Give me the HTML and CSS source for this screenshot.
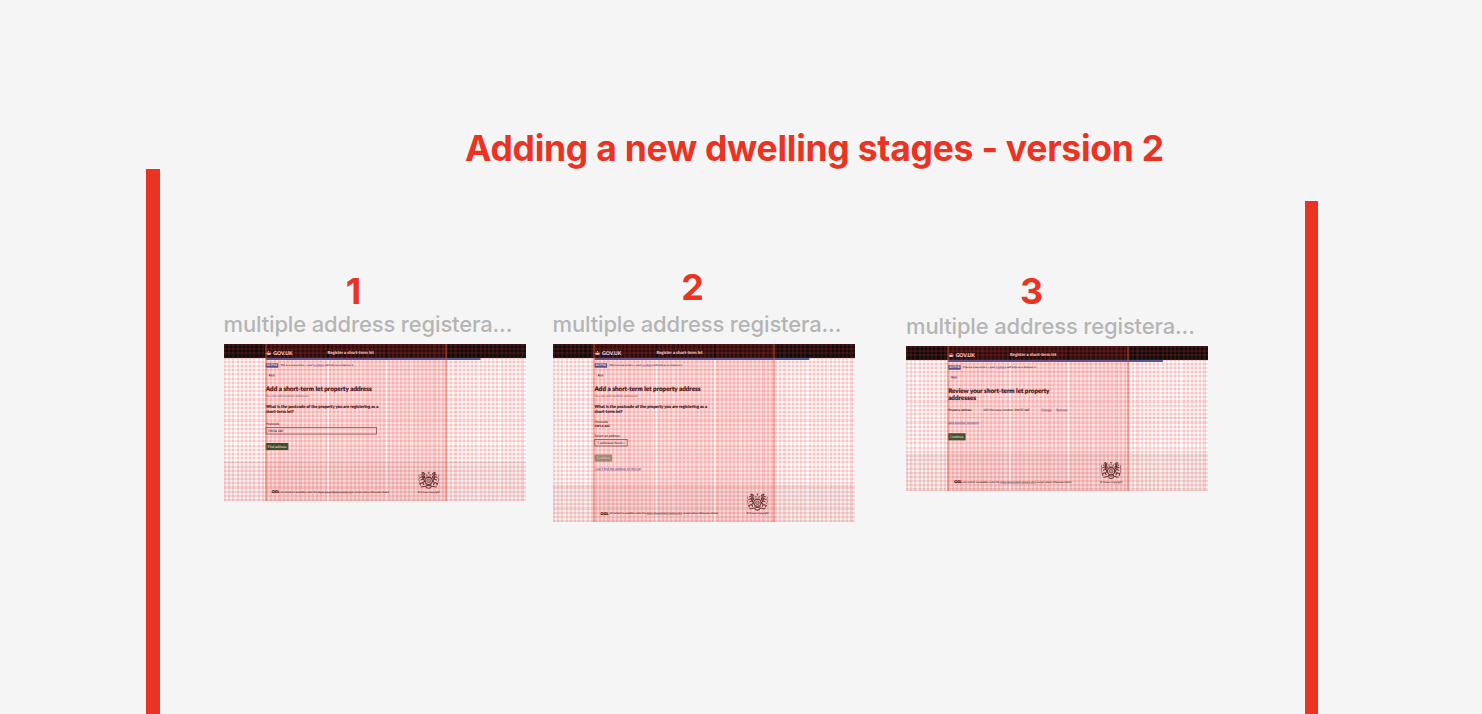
FILE: index.html
```html
<!DOCTYPE html>
<html lang="en">
<head>
<meta charset="utf-8">
<title>Adding a new dwelling stages</title>
<link rel="stylesheet" href="styles.css">
</head>
<body>
<svg class="defs" aria-hidden="true">
  <symbol id="crown" viewBox="0 0 28 22">
    <path d="M5 21h18v-3H5zM4 17L1 9l7 4 1-5 3 4 2-7 2 7 3-4 1 5 7-4-3 8z"/>
    <circle cx="14" cy="3" r="2.5"/><circle cx="7" cy="6" r="2"/><circle cx="21" cy="6" r="2"/>
  </symbol>
  <symbol id="arms" viewBox="0 0 100 88">
    <g fill="none" stroke="currentColor" stroke-width="5">
      <circle cx="50" cy="46" r="17"/>
      <circle cx="50" cy="46" r="9" fill="currentColor" fill-opacity=".35" stroke-width="3"/>
      <path d="M50 1v12M45 5h10M40 24h20l2-9-6 3-6-5-6 5-6-3z" stroke-width="2.5"/>
      <path d="M16 9l7-4 8 6-4 8 5 8-7 12 6 8-9 8 6 10M20 16l-9 2M23 25l-13 5M25 36l-14 7M22 54l-14 5 4 9"/>
      <path d="M84 9l-7-4-8 6 4 8-5 8 7 12-6 8 9 8-6 10M80 16l9 2M77 25l13 5M75 36l14 7M78 54l14 5-4 9"/>
      <path d="M19 8l8 2-2 9 3 9-6 12-3-8 2-12zM81 8l-8 2 2 9-3 9 6 12 3-8-2-12z" fill="currentColor" stroke="none"/>
      <path d="M4 16c-4 8 6 12 0 20s6 12 2 18M96 16c4 8-6 12 0 20s-6 12-2 18" stroke-width="3"/>
      <path d="M12 73c10 6 17-6 26 0 2 11 22 11 24 0 9-6 16 6 26 0M36 64c4 6 24 6 28 0"/>
    </g>
  </symbol>
</svg>

<main class="canvas">
  <h1 class="title">Adding a new dwelling stages - version 2</h1>
  <div class="bar bar-left"></div>
  <div class="bar bar-right"></div>

  <section class="stage stage-1">
    <div class="number">1</div>
    <div class="label">multiple address registera...</div>
    <div class="frame">
      <div class="page">
        <header class="top"><svg class="crown"><use href="#crown"/></svg><b class="gov">GOV.UK</b><b class="service">Register a short-term let</b></header>
        <div class="rule"></div>
        <div class="content">
          <div class="phase"><b class="tag">ALPHA</b><span>This is a new service – your <a>feedback</a> will help us to improve it.</span></div>
          <div class="back">‹ <a>Back</a></div>
          <h2 class="heading">Add a short-term let property address</h2>
          <div class="hint">You can add multiple addresses</div>
          <h3 class="question">What is the postcode of the property you are registering as a<br>short-term let?</h3>
          <div class="field">Postcode</div>
          <div class="input">SW1A 4AE</div>
          <div class="button find">Find address</div>
        </div>
        <footer class="foot"><b class="ogl">OGL</b><span class="licence">All content is available under the <a>Open Government Licence v3.0</a>, except where otherwise stated</span><div class="crest"><svg><use href="#arms"/></svg><span>© Crown copyright</span></div></footer>
      </div>
      <div class="columns"><i></i><i></i><i></i></div>
      <div class="mesh"></div>
    </div>
  </section>

  <section class="stage stage-2">
    <div class="number">2</div>
    <div class="label">multiple address registera...</div>
    <div class="frame">
      <div class="page">
        <header class="top"><svg class="crown"><use href="#crown"/></svg><b class="gov">GOV.UK</b><b class="service">Register a short-term let</b></header>
        <div class="rule"></div>
        <div class="content">
          <div class="phase"><b class="tag">ALPHA</b><span>This is a new service – your <a>feedback</a> will help us to improve it.</span></div>
          <div class="back">‹ <a>Back</a></div>
          <h2 class="heading">Add a short-term let property address</h2>
          <div class="hint">You can add multiple addresses</div>
          <h3 class="question">What is the postcode of the property you are registering as a<br>short-term let?</h3>
          <div class="field">Postcode</div>
          <div class="postcode">SW1A 4AE</div>
          <div class="field select-label">Select an address</div>
          <div class="select">5 addresses found <small>▾</small></div>
          <div class="button disabled">Continue</div>
          <div class="link missing"><a>I can’t find the address on the list</a></div>
        </div>
        <footer class="foot"><b class="ogl">OGL</b><span class="licence">All content is available under the <a>Open Government Licence v3.0</a>, except where otherwise stated</span><div class="crest"><svg><use href="#arms"/></svg><span>© Crown copyright</span></div></footer>
      </div>
      <div class="columns"><i></i><i></i><i></i></div>
      <div class="mesh"></div>
    </div>
  </section>

  <section class="stage stage-3">
    <div class="number">3</div>
    <div class="label">multiple address registera...</div>
    <div class="frame">
      <div class="page">
        <header class="top"><svg class="crown"><use href="#crown"/></svg><b class="gov">GOV.UK</b><b class="service">Register a short-term let</b></header>
        <div class="rule"></div>
        <div class="content">
          <div class="phase"><b class="tag">ALPHA</b><span>This is a new service – your <a>feedback</a> will help us to improve it.</span></div>
          <div class="back">‹ <a>Back</a></div>
          <h2 class="heading">Review your short-term let property<br>addresses</h2>
          <div class="summary"><b>Property address</b><span>123 His Lane, London, SW1D 4AE</span><a>Change</a><a>Remove</a></div>
          <div class="link another"><a>Add another property</a></div>
          <div class="button">Continue</div>
        </div>
        <footer class="foot"><b class="ogl">OGL</b><span class="licence">All content is available under the <a>Open Government Licence v3.0</a>, except where otherwise stated</span><div class="crest"><svg><use href="#arms"/></svg><span>© Crown copyright</span></div></footer>
      </div>
      <div class="columns"><i></i><i></i><i></i></div>
      <div class="mesh"></div>
    </div>
  </section>
</main>
</body>
</html>
```
FILE: styles.css
```css
* { box-sizing: border-box; }
body { margin: 0; background: #f5f5f5; font-family: Inter, sans-serif; overflow: hidden; }
.defs { position: absolute; width: 0; height: 0; }

/* Free canvas: title, bars and stages are placed as objects */
.canvas { position: relative; width: 1482px; height: 714px; overflow: hidden; }
.title { position: absolute; left: 465px; top: 127px; margin: 0; font-size: 35.5px; line-height: 44px; font-weight: 700; letter-spacing: -.26px; color: #eb3323; white-space: nowrap; }
.bar { position: absolute; bottom: 0; background: #eb3323; }
.bar-left { left: 146.4px; top: 169px; width: 14px; }
.bar-right { left: 1305px; top: 201.4px; width: 13px; }
.stage { position: absolute; width: 302px; }
.stage-1 { left: 223.5px; top: 270px; --h: 157px; --gap: 0px; --inset: 199px; }
.stage-2 { left: 552.5px; top: 266px; --h: 178px; --gap: 4px; --inset: 198px; }
.stage-3 { left: 906px; top: 270px; --h: 145px; --gap: 2px; --inset: 201px; }
.number { height: 42px; line-height: 42px; font-size: 36px; font-weight: 700; color: #eb3323; text-align: center; padding-right: 42px; }
.stage-2 .number { padding-right: 22px; }
.stage-3 .number { padding-right: 51px; }
.label { height: 32px; margin-top: var(--gap); line-height: 25px; font-size: 22px; font-weight: 450; letter-spacing: -.15px; color: #b5b5b5; white-space: nowrap; }

/* Frame thumbnail, drawn at full size and scaled down */
.frame { position: relative; width: 302px; height: var(--h); background: #fff; overflow: hidden; }
.page { display: flex; flex-direction: column; width: 1440px; height: calc(var(--h) * 4.768); transform: scale(.2097); transform-origin: 0 0; font-family: Lato, "Open Sans", sans-serif; font-size: 12.8px; color: #0b0c0c; white-space: nowrap; text-rendering: geometricPrecision; -webkit-text-stroke: .2px currentColor; }
.page a { text-decoration: underline; color: #1d52a8; }
.top { display: flex; align-items: center; height: 67px; padding: 18px 0 0 var(--inset); background: #0b0c0c; color: #fff; }
.crown { width: 28px; height: 22px; margin-right: 8px; fill: #fff; }
.gov { width: 259px; font-size: 24px; font-weight: 900; }
.service { font-size: 20.4px; }
.rule { height: 9px; width: 1024px; margin-left: var(--inset); background: #1d60b0; }
.content { flex: 1; padding-left: var(--inset); }
.phase { display: flex; align-items: center; gap: 10px; width: 860px; height: 46px; padding-top: 7px; border-bottom: 1px solid #b1b4b6; }
.tag { width: 60px; height: 21px; line-height: 21px; background: #1d60b0; color: #fff; text-align: center; font-size: 15px; }
.back { height: 16px; line-height: 16px; margin: 17px 0 41px 8px; }
.back a, .licence a { color: #0b0c0c; }
.heading { margin: 0; font-size: 30px; line-height: 34px; font-weight: 900; -webkit-text-stroke-width: .9px; }
.hint { height: 14px; line-height: 14px; margin: 12px 0 29px; color: #6f777b; font-size: 15px; }
.question { margin: 0 0 36px; font-size: 19.9px; line-height: 25px; font-weight: 900; -webkit-text-stroke-width: .6px; }
.field { height: 16px; line-height: 16px; font-size: 16px; }
.input { width: 530px; height: 34px; line-height: 28px; margin: 10px 0 41px; padding-left: 8px; border: 3px solid #3b2c2c; font-size: 15px; }
.button { width: 83px; height: 34px; line-height: 34px; background: #00602f; color: #fff; text-align: center; font-size: 16px; }
.find { width: 108px; }
.disabled { width: 84px; background: #7fa889; }
.stage-2 .question { margin-bottom: 27px; }
.postcode { font-weight: 900; font-size: 15px; line-height: 16px; margin: 6px 0 31px; }
.select { width: 157px; height: 34px; line-height: 28px; margin: 7px 0 39px; padding-left: 10px; border: 3px solid #3b2c2c; font-size: 15px; }
.link { height: 16px; line-height: 16px; font-size: 15.2px; }
.missing { margin-top: 29px; }
.summary { display: grid; grid-template-columns: 167px 277px 72px 60px; height: 44px; line-height: 20px; margin-top: 33px; border-bottom: 1px solid #b1b4b6; font-size: 14.8px; }
.another { margin: 18px 0 41px; }
.another a { font-size: 15.5px; }
.foot { display: flex; align-items: flex-end; height: 186px; padding: 0 0 37px calc(var(--inset) + 29px); background: #f3f2f1; border-top: 2px solid #d1d2d4; }
.stage-2 .foot, .stage-3 .foot { height: 175px; padding-bottom: 33px; }
.ogl { width: 42px; font-size: 18px; line-height: 15px; font-weight: 900; -webkit-text-stroke-width: 1px; }
.licence { width: 656px; font-size: 12.2px; line-height: 15px; }
.crest { display: flex; flex-direction: column; align-items: center; width: 100px; gap: 2px; font-size: 12.5px; line-height: 15px; }
.crest svg { width: 100px; height: 88px; color: #0b0c0c; opacity: .8; }
.stage-3 .foot { padding-bottom: 35px; }

/* Layout column and square grid overlays */
.columns { position: absolute; left: 41px; top: 0; bottom: 0; width: 182px; display: grid; grid-template-columns: 60px 57px 57px; gap: 2px; border: solid rgba(230, 80, 50, .45); border-width: 0 2px; }
.stage-3 .columns { left: 41.4px; }
.stage-2 .columns { left: 40.5px; width: 182px; }
.columns i { background: rgba(240, 40, 40, .125); }
.mesh { position: absolute; inset: 0; background: repeating-linear-gradient(to right, rgba(240, 40, 40, .15) 0 2.09px, transparent 2.09px 4.19px), repeating-linear-gradient(to bottom, rgba(240, 40, 40, .15) 0 2.09px, transparent 2.09px 4.19px); }
```
